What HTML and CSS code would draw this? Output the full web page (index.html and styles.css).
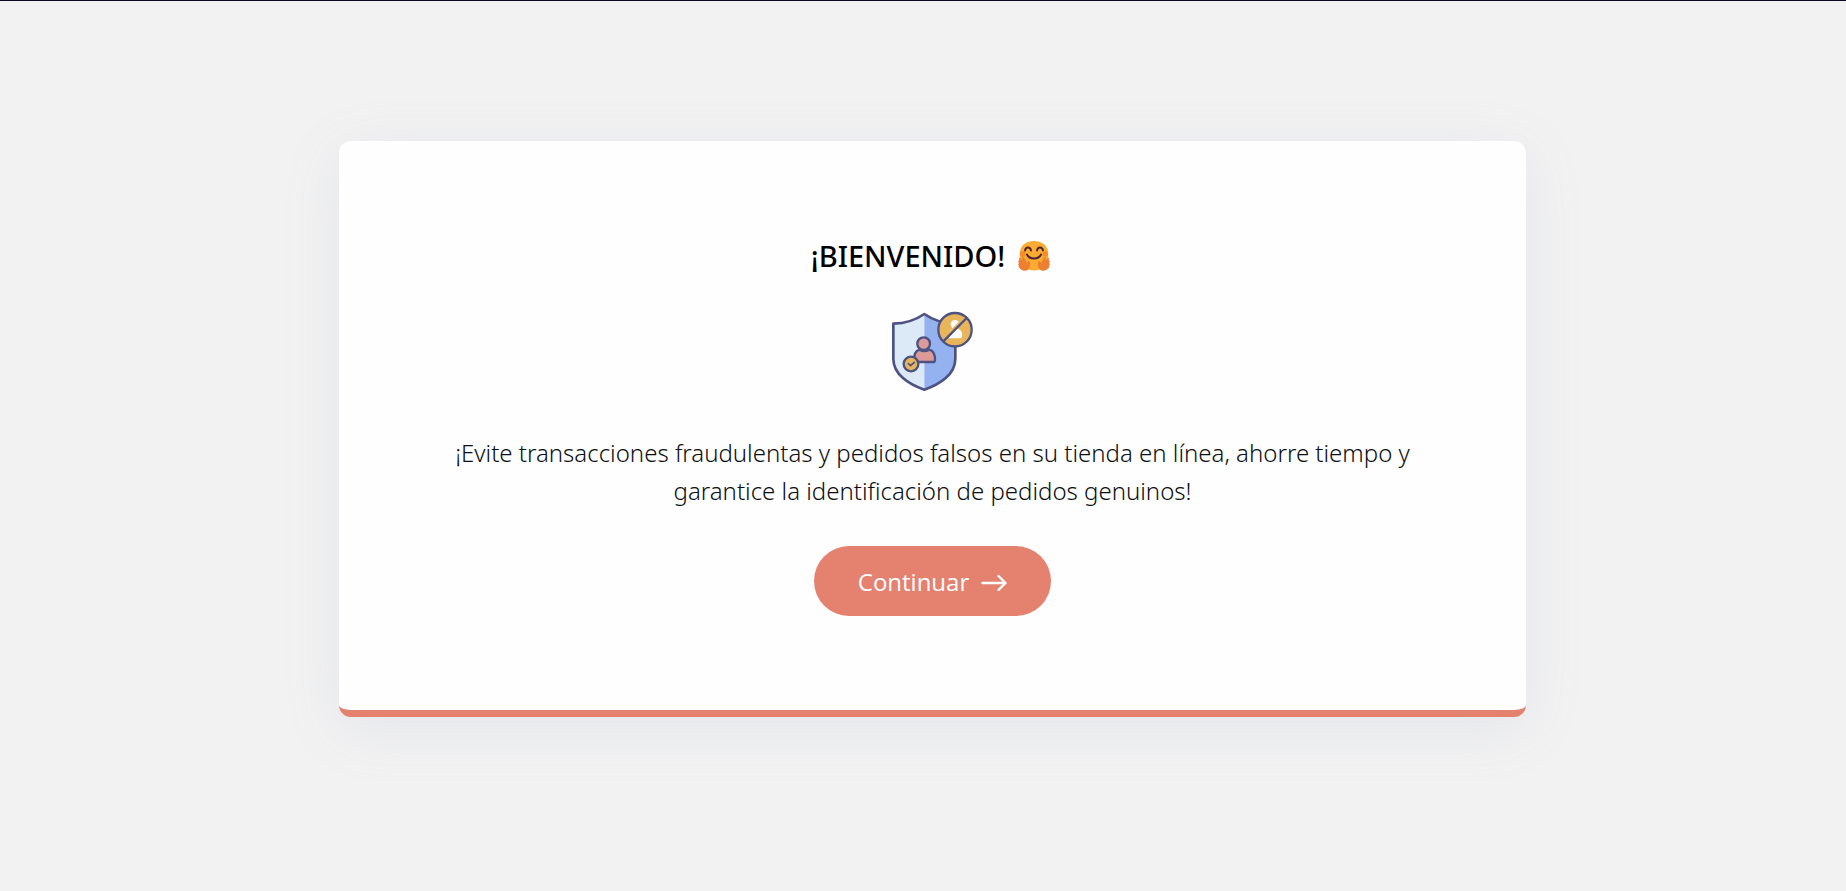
FILE: index.html
```html
<!DOCTYPE html>
<html lang="es">
<head>
<meta charset="utf-8">
<meta name="viewport" content="width=device-width, initial-scale=1">
<title>Bienvenido</title>
<link rel="stylesheet" href="styles.css">
</head>
<body>
<main class="page">
  <section class="card">
    <h1 class="title">
      <span>¡BIENVENIDO!</span>
      <svg class="emoji" viewBox="0 0 32 32" role="img" aria-label="Cara abrazando">
        <path fill="#fbaa32" d="M16 1C23 1 29 4.500 30 11.500C31 18 30 30 16 30.500C2 30 1 18 2 11.500C3 4.500 9 1 16 1Z"/>
        <circle cx="4.800" cy="14" r="2.800" fill="#f78a2c"/>
        <circle cx="27.200" cy="14" r="2.800" fill="#f78a2c"/>
        <path fill="none" stroke="#4a2430" stroke-width="1.900" stroke-linecap="round" d="M7 10.500C7.800 6.500 12.200 6.500 13 10.500M19 10.500C19.800 6.500 24.200 6.500 25 10.500M9 14.500C11.500 19.800 20.500 19.800 23 14.500"/>
        <path id="hand" fill="#ed7f30" d="M1 17.500L4.500 20L4 17.500Q5.500 16 6.500 18.500L9 23.500Q9.500 20.500 11 21Q12.500 22 12 26Q11 30.500 7 30.800Q4 31 2 28.500L0.500 27L1 25.500L0 24.500L1 23L0 21.500L1.200 20.500Z"/>
        <use href="#hand" transform="matrix(-1 0 0 1 32 0)"/>
      </svg>
    </h1>
    <svg class="shield" viewBox="33 29 252 252" role="img" aria-label="Escudo antifraude">
      <path fill="#dce9f6" d="M133 41Q93 69 40 70V175C40 222 86 252 133 268Z"/>
      <path fill="#94b2f0" d="M133 41Q173 69 226 70V175C226 222 180 252 133 268Z"/>
      <path fill="none" stroke="#4d5282" stroke-width="8" stroke-linejoin="round" d="M133 41Q93 69 40 70V175C40 222 86 252 133 268C180 252 226 222 226 175V70Q173 69 133 41Z"/>
      <g stroke="#4d5282" stroke-width="7" stroke-linejoin="round">
        <path fill="#dc9a98" d="M119 148Q133 157 147 148Q166 152 165 180Q165 185 160 185H103Q99 153 119 148Z"/>
        <circle cx="131" cy="130" r="19" fill="#dc9a98"/>
        <circle cx="93" cy="191" r="22" fill="#e8b55b"/>
        <path fill="none" stroke-width="5" stroke-linecap="round" d="M85 190L92 196L103 186"/>
        <circle cx="225" cy="88" r="50" fill="#e8b55b"/>
      </g>
      <circle cx="225" cy="72" r="13" fill="#fff"/>
      <path fill="#fff" d="M205 114Q202 88 219 85Q226 89 234 85Q249 90 246 110Q245 114 240 114Z"/>
      <path stroke="#e8b55b" stroke-width="11" d="M198 111L252 57"/>
      <path stroke="#4d5282" stroke-width="7" d="M190 123L260 53"/>
    </svg>
    <p class="lead">¡Evite transacciones fraudulentas y pedidos falsos en su tienda en línea, ahorre tiempo y garantice la identificación de pedidos genuinos!</p>
    <button class="continue" type="button">
      <span>Continuar</span>
      <svg class="arrow" viewBox="0 0 26 18" aria-hidden="true"><path fill="none" stroke="currentColor" stroke-width="2.400" stroke-linecap="round" stroke-linejoin="round" d="M1.500 10H24.500M17.500 3L24.500 10L17.500 17"/></svg>
    </button>
  </section>
</main>
</body>
</html>
```
FILE: styles.css
```css
* { box-sizing: border-box; }
body {
  margin: 0;
  min-height: 100vh;
  border-top: 1px solid #0d0720;
  background: #f2f2f2;
  font-family: "Segoe UI", "Noto Sans", sans-serif;
}
.page {
  padding: 140px 320px 140px 339px;
}
.card {
  display: flex;
  flex-direction: column;
  align-items: center;
  padding: 91px 96px 94px;
  border-bottom: 7px solid #e5816f;
  border-radius: 12px;
  background: #fefefe;
  box-shadow: 0 12px 60px rgba(140, 145, 200, 0.12);
}
.title {
  display: flex;
  align-items: center;
  gap: 13px;
  margin: 0;
  padding-right: 4px;
  color: #000;
  font-size: 29px;
  font-weight: 500;
  line-height: 48px;
}
.emoji { width: 32px; height: 32px; }
.shield {
  width: 84px;
  height: 84px;
  margin: 30px 0 40px;
}
.lead {
  margin: 0 0 36px;
  color: #0c0e14;
  font-size: 24px;
  font-weight: 300;
  line-height: 38px;
  text-align: center;
}
.continue {
  display: flex;
  align-items: center;
  gap: 12px;
  padding: 17px 44px 15px;
  border: 0;
  border-radius: 35px;
  background: #e5816f;
  color: #fff;
  font-family: "Segoe UI", "Open Sans", sans-serif;
  font-size: 24px;
  line-height: 38px;
  cursor: pointer;
}
.arrow { width: 26px; height: 18px; }
```
